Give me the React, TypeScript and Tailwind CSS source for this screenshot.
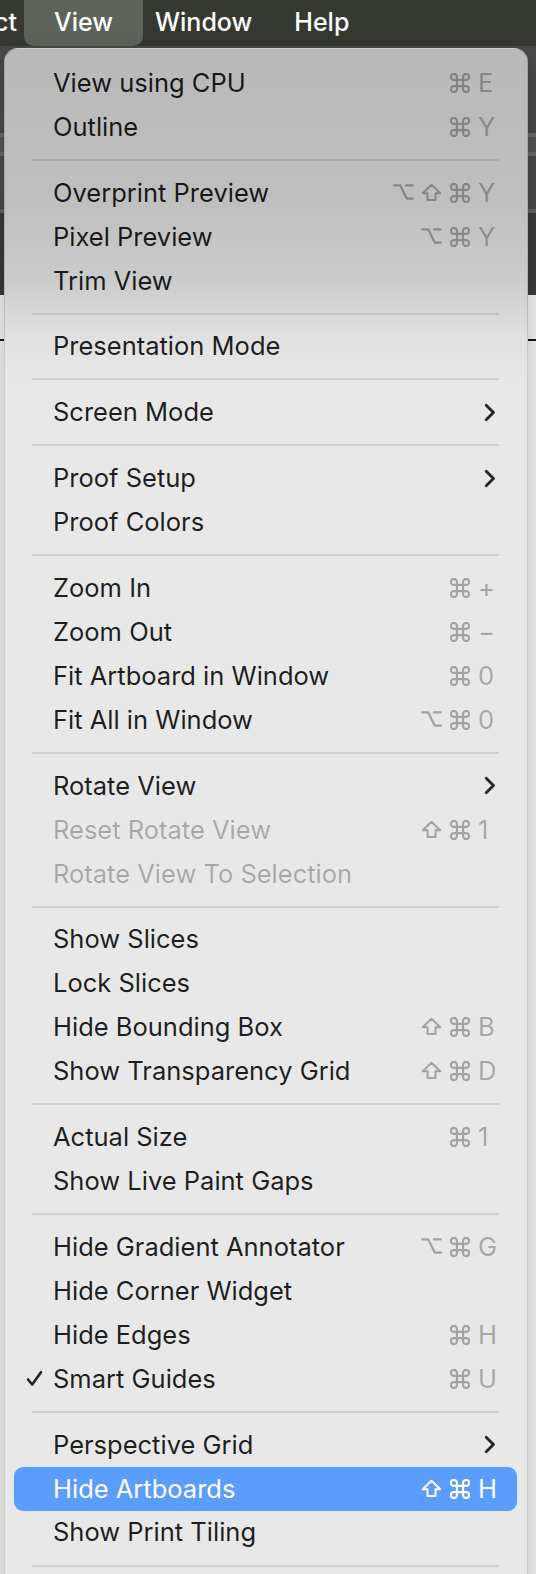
import React from 'react'

type Mod = 'opt' | 'shift' | 'cmd'

type Entry =
  | 'sep'
  | {
      label: string
      mods?: Mod[]
      keyChar?: string
      sub?: boolean
      disabled?: boolean
      checked?: boolean
      active?: boolean
    }

const ITEMS: Entry[] = [
  { label: 'View using CPU', mods: ['cmd'], keyChar: 'E' },
  { label: 'Outline', mods: ['cmd'], keyChar: 'Y' },
  'sep',
  { label: 'Overprint Preview', mods: ['opt', 'shift', 'cmd'], keyChar: 'Y' },
  { label: 'Pixel Preview', mods: ['opt', 'cmd'], keyChar: 'Y' },
  { label: 'Trim View' },
  'sep',
  { label: 'Presentation Mode' },
  'sep',
  { label: 'Screen Mode', sub: true },
  'sep',
  { label: 'Proof Setup', sub: true },
  { label: 'Proof Colors' },
  'sep',
  { label: 'Zoom In', mods: ['cmd'], keyChar: '+' },
  { label: 'Zoom Out', mods: ['cmd'], keyChar: '−' },
  { label: 'Fit Artboard in Window', mods: ['cmd'], keyChar: '0' },
  { label: 'Fit All in Window', mods: ['opt', 'cmd'], keyChar: '0' },
  'sep',
  { label: 'Rotate View', sub: true },
  { label: 'Reset Rotate View', mods: ['shift', 'cmd'], keyChar: '1', disabled: true },
  { label: 'Rotate View To Selection', disabled: true },
  'sep',
  { label: 'Show Slices' },
  { label: 'Lock Slices' },
  { label: 'Hide Bounding Box', mods: ['shift', 'cmd'], keyChar: 'B' },
  { label: 'Show Transparency Grid', mods: ['shift', 'cmd'], keyChar: 'D' },
  'sep',
  { label: 'Actual Size', mods: ['cmd'], keyChar: '1' },
  { label: 'Show Live Paint Gaps' },
  'sep',
  { label: 'Hide Gradient Annotator', mods: ['opt', 'cmd'], keyChar: 'G' },
  { label: 'Hide Corner Widget' },
  { label: 'Hide Edges', mods: ['cmd'], keyChar: 'H' },
  { label: 'Smart Guides', mods: ['cmd'], keyChar: 'U', checked: true },
  'sep',
  { label: 'Perspective Grid', sub: true },
  { label: 'Hide Artboards', mods: ['shift', 'cmd'], keyChar: 'H', active: true },
  { label: 'Show Print Tiling' },
  'sep',
]

function ModGlyph({ mod }: { mod: Mod }) {
  if (mod === 'cmd') {
    return (
      <svg width="20" height="20" viewBox="2.2 2.2 19.6 19.6" fill="none" stroke="currentColor" strokeWidth="2.1" strokeLinecap="round" strokeLinejoin="round">
        <path d="M15 6v12a3 3 0 1 0 3-3H6a3 3 0 1 0 3 3V6a3 3 0 1 0-3 3h12a3 3 0 1 0-3-3" />
      </svg>
    )
  }
  if (mod === 'opt') {
    return (
      <svg width="22" height="18" viewBox="0 0 22 18" fill="none" stroke="currentColor" strokeWidth="2.3" strokeLinecap="round" strokeLinejoin="round">
        <path d="M1.3 2h6.2l7 14h6.2" />
        <path d="M13.5 2h7.2" />
      </svg>
    )
  }
  return (
    <svg width="21" height="19" viewBox="0 0 22 20" fill="none" stroke="currentColor" strokeWidth="2.1" strokeLinejoin="round">
      <path d="M11 1.8 L1.8 10.8 H6.8 V18 H15.2 V10.8 H20.2 Z" />
    </svg>
  )
}

function Row({ item }: { item: Exclude<Entry, 'sep'> }) {
  const textColor = item.active ? 'text-white' : item.disabled ? 'text-black/[0.28]' : 'text-black/[0.88]'
  const keyColor = item.active ? 'text-white' : 'text-black/[0.3]'
  return (
    <div className={`flex h-[43.95px] items-center rounded-[9px] ${item.active ? 'bg-[#5b9dfa]' : ''} ${item.sub ? 'pr-[21px]' : 'pr-[23px]'}`}>
      <span className="flex w-[39px] shrink-0 pl-[12px]">
        {item.checked && (
          <svg width="17" height="17" viewBox="0 0 17 17" fill="none" stroke="#222" strokeWidth="2.6" strokeLinecap="round" strokeLinejoin="round">
            <path d="M2 9.5 L6.2 14.5 L15 2.2" />
          </svg>
        )}
      </span>
      <span className={`text-[25.5px] ${textColor}`}>{item.label}</span>
      {item.keyChar && (
        <span className={`ml-auto flex items-center ${keyColor}`}>
          <span className="flex gap-[7px]">
            {item.mods?.map(m => (
              <span key={m} className="flex w-[21px] justify-center">
                <ModGlyph mod={m} />
              </span>
            ))}
          </span>
          <span className="ml-[8px] w-[16px] text-[25.5px]">{item.keyChar}</span>
        </span>
      )}
      {item.sub && (
        <svg className="ml-auto" width="12" height="19" viewBox="0 0 12 19" fill="none" stroke="#222" strokeWidth="2.8" strokeLinecap="round" strokeLinejoin="round">
          <path d="M2.2 2.2 L9.5 9.5 L2.2 16.8" />
        </svg>
      )}
    </div>
  )
}

export default function App() {
  return (
    <div className="relative h-[1574px] w-[536px] overflow-hidden bg-[#f4f4f4] font-['Inter','Noto_Sans',sans-serif]">
      {/* macOS menu bar */}
      <div className="flex h-[46px] items-stretch bg-[#363932] text-[25px] font-medium text-white">
        <span className="-ml-[6px] flex w-[30px] items-center">ct</span>
        <span className="flex w-[119px] items-center justify-center rounded-b-[10px] bg-[#5e6459]">View</span>
        <span className="ml-[12px] flex items-center">Window</span>
        <span className="ml-[42px] flex items-center">Help</span>
      </div>

      {/* app toolbar behind the menu */}
      <div className="flex h-[249px] flex-col bg-[#3a3a3a]">
        <div className="h-[87px] bg-[#4a4a4a]" />
        <div className="h-[4px] bg-[#6c6c6c]" />
        <div className="h-[15px] bg-[#555]" />
        <div className="h-[4px] bg-[#6a6a6a]" />
        <div className="h-[53px] bg-[#4b4b4b]" />
        <div className="h-[4px] bg-[#626262]" />
      </div>
      <div className="mt-[44px] h-[2px] bg-[#111]" />

      {/* View dropdown */}
      <div className="absolute left-[4px] top-[48px] h-[1560px] w-[524px] rounded-[14px] border border-black/[0.12] bg-[linear-gradient(to_bottom,#b9b9b9_0px,#bfbfbf_150px,#cbcbcb_230px,#e1e1e1_290px,#e8e8e8_335px)] pl-[9px] pr-[10px] pt-[12px] shadow-[0_8px_24px_rgba(0,0,0,0.25)]">
        {ITEMS.map((it, i) =>
          it === 'sep' ? (
            <div key={i} className="mx-[18px] flex h-[21.95px] items-center">
              <div className="h-[2px] w-full bg-black/[0.1]" />
            </div>
          ) : (
            <Row key={i} item={it} />
          )
        )}
      </div>
    </div>
  )
}
